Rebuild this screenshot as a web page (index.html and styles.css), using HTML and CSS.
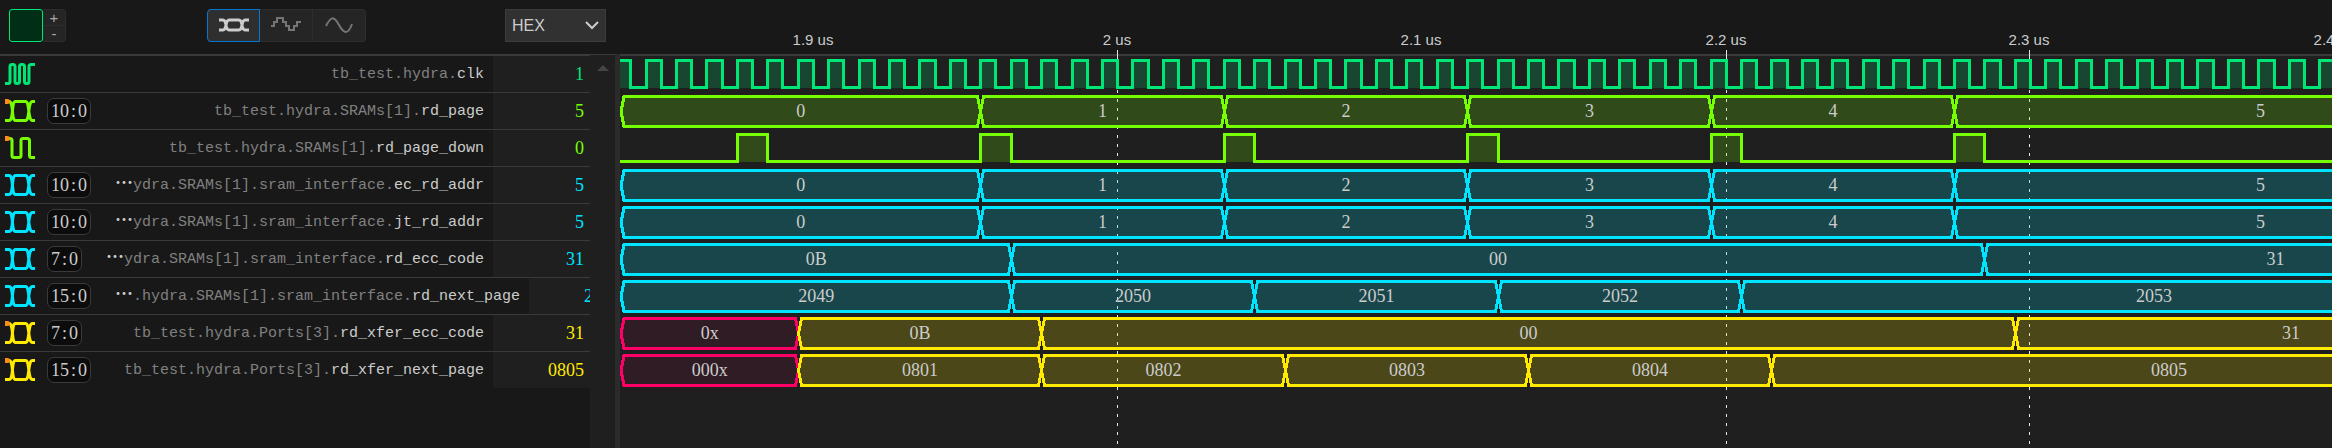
FILE: index.html
```html
<!DOCTYPE html>
<html lang="en">
<head>
<meta charset="utf-8">
<title>Waveform viewer</title>
<link rel="stylesheet" href="styles.css">
</head>
<body>
<svg class="defs" aria-hidden="true">
  <symbol id="i-clk" viewBox="0 0 30 22"><path d="M0 20.500H3Q5 20.500 5 18.500V3.500Q5 1.500 7 1.500H8Q10 1.500 10 3.500V18.500Q10 20.500 12 20.500Q14.500 20.500 14.500 18.500V3.500Q14.500 1.500 16.500 1.500H17.500Q19.500 1.500 19.500 3.500V18.500Q19.500 20.500 21.500 20.500H22Q24 20.500 24 18.500V3.500Q24 1.500 26 1.500H30"/></symbol>
  <symbol id="i-bus" viewBox="0 0 30 22"><path d="M0 1.500H4C9 1.500 6 20.500 10.500 20.500H20.500C25 20.500 22.500 1.500 27.500 1.500H30M0 20.500H4C9 20.500 6 1.500 10.500 1.500H20.500C25 1.500 22.500 20.500 27.500 20.500H30"/></symbol>
  <symbol id="i-bit" viewBox="0 0 30 22"><path d="M0 1.500H5Q7 1.500 7 3.500V18.500Q7 20.500 9 20.500H14Q16 20.500 16 18.500V3.500Q16 1.500 18 1.500H22Q24.500 1.500 24.500 3.500V18.500Q24.500 20.500 26.500 20.500H30"/></symbol>
</svg>
<main class="viewer">
  <section class="side">
    <header class="toolbar">
      <button class="swatch" aria-label="Signal colour"></button>
      <div class="stepper"><button aria-label="Increase height">+</button><button aria-label="Decrease height">-</button></div>
      <div class="modes">
        <button class="on" aria-label="Digital"><svg width="32" height="16" viewBox="0 0 32 16"><path d="M1 3H5C9 3 7 13 11 13H21C25 13 23 3 27 3H31M1 13H5C9 13 7 3 11 3H21C25 3 23 13 27 13H31"/></svg></button>
        <button aria-label="Stepped"><svg width="32" height="16" viewBox="0 0 32 16"><path d="M1 9H4V5H7V1H13V5H16V9H19V13H24V9H27V5H31"/></svg></button>
        <button aria-label="Smooth"><svg width="32" height="16" viewBox="0 0 32 16"><path d="M3 9C8 -1 11 -1 16 8S25 18 29 7"/></svg></button>
      </div>
      <div class="radix">
        <select aria-label="Number format"><option>HEX</option></select>
        <svg width="14" height="9" viewBox="0 0 14 9" aria-hidden="true"><path d="M1 1L7 7L13 1"/></svg>
      </div>
    </header>
    <div class="body">
      <ul class="signals">
        <li class="clk"><svg class="ico"><use href="#i-clk"/></svg><span class="name"><i>tb_test.hydra.</i>clk</span><span class="val">1</span></li>
        <li class="lime dot"><svg class="ico"><use href="#i-bus"/></svg><span class="range">10<b>:</b>0</span><span class="name"><i>tb_test.hydra.SRAMs[1].</i>rd_page</span><span class="val">5</span></li>
        <li class="lime dot"><svg class="ico"><use href="#i-bit"/></svg><span class="name"><i>tb_test.hydra.SRAMs[1].</i>rd_page_down</span><span class="val">0</span></li>
        <li class="cyan"><svg class="ico"><use href="#i-bus"/></svg><span class="range">10<b>:</b>0</span><span class="name"><em>⋯</em><i>ydra.SRAMs[1].sram_interface.</i>ec_rd_addr</span><span class="val">5</span></li>
        <li class="cyan"><svg class="ico"><use href="#i-bus"/></svg><span class="range">10<b>:</b>0</span><span class="name"><em>⋯</em><i>ydra.SRAMs[1].sram_interface.</i>jt_rd_addr</span><span class="val">5</span></li>
        <li class="cyan"><svg class="ico"><use href="#i-bus"/></svg><span class="range">7<b>:</b>0</span><span class="name"><em>⋯</em><i>ydra.SRAMs[1].sram_interface.</i>rd_ecc_code</span><span class="val">31</span></li>
        <li class="cyan"><svg class="ico"><use href="#i-bus"/></svg><span class="range">15<b>:</b>0</span><span class="name"><em>⋯</em><i>.hydra.SRAMs[1].sram_interface.</i>rd_next_page</span><span class="val">2053</span></li>
        <li class="yellow dot"><svg class="ico"><use href="#i-bus"/></svg><span class="range">7<b>:</b>0</span><span class="name"><i>tb_test.hydra.Ports[3].</i>rd_xfer_ecc_code</span><span class="val">31</span></li>
        <li class="yellow dot"><svg class="ico"><use href="#i-bus"/></svg><span class="range">15<b>:</b>0</span><span class="name"><i>tb_test.hydra.Ports[3].</i>rd_xfer_next_page</span><span class="val">0805</span></li>
      </ul>
      <div class="scroll"><span class="up"></span></div>
    </div>
  </section>
  <div class="splitter"></div>
  <section class="waves">
    <svg class="grid" id="grid"></svg>
    <svg class="ruler" id="ruler"></svg>
    <div class="rows" id="rows"></div>
  </section>
</main>
<script src="waves.js"></script>
</body>
</html>
```
FILE: styles.css
```css
* { box-sizing: border-box; }
body {
  margin: 0;
  background: #181818;
  color: #ccc;
  font-family: "Liberation Sans", Arial, sans-serif;
  overflow: hidden;
}
button { font: inherit; color: inherit; padding: 0; margin: 0; }
.defs { display: none; }
.viewer { display: flex; min-height: 100vh; }

.side { flex: none; width: 615px; display: flex; flex-direction: column; }
.toolbar {
  display: flex;
  align-items: center;
  height: 55px;
  padding: 0 9px 4px;
  border-bottom: 1px solid #3a3a3a;
}
.swatch { width: 34px; height: 33px; border: 1px solid #00e676; border-radius: 3px; background: #002e17; }
.stepper {
  display: flex;
  flex-direction: column;
  width: 23px;
  height: 33px;
  border: 1px solid #2d2d2d;
  border-left: 0;
  border-radius: 0 4px 4px 0;
  background: #252525;
  color: #aaa;
  font-size: 15px;
  line-height: 15px;
}
.stepper button { flex: 1; border: 0; background: none; }
.stepper button + button { border-top: 1px solid #2d2d2d; }
.modes { display: flex; height: 33px; margin-left: 141px; }
.modes button {
  display: flex;
  align-items: center;
  justify-content: center;
  width: 53px;
  border: 1px solid #2d2d2d;
  border-left: 0;
  background: #252525;
}
.modes button:last-child { border-radius: 0 4px 4px 0; }
.modes .on { border: 1px solid #0078d4; border-radius: 4px 0 0 4px; background: #2f2f2f; }
.modes path { fill: none; stroke: #757575; stroke-width: 2; }
.modes .on path { stroke: #ccc; stroke-width: 3; }
.radix { display: grid; align-items: center; width: 101px; height: 33px; margin-left: auto; }
.radix > * { grid-area: 1 / 1; }
.radix select {
  appearance: none;
  width: 100%;
  height: 100%;
  padding: 0 6px;
  border: 1px solid #3c3c3c;
  border-radius: 0;
  background: #313131;
  color: #ccc;
  font: 16px "Liberation Sans", Arial, sans-serif;
}
.radix svg { justify-self: end; margin-right: 7px; pointer-events: none; }
.radix path { fill: none; stroke: #ccc; stroke-width: 2; }

.body { flex: 1; display: flex; }
.signals {
  flex: 1;
  min-width: 0;
  margin: 0;
  padding: 0;
  border-top: 1px solid #3a3a3a;
  list-style: none;
}
.signals li {
  position: relative;
  display: flex;
  align-items: center;
  height: 37px;
  padding-left: 5px;
  border-bottom: 1px solid #3a3a3a;
  overflow: hidden;
}
.signals li:last-child { border-bottom-color: transparent; }
.ico { flex: none; width: 30px; height: 22px; margin-right: 12px; fill: none; stroke: currentColor; stroke-width: 3; }
.dot::before {
  content: "";
  position: absolute;
  left: 5px;
  top: 6px;
  width: 5px;
  height: 5px;
  border-radius: 0 3px 3px 0;
  background: #ff8c1a;
}
.range {
  flex: none;
  height: 26px;
  padding: 0 3px;
  border: 1px solid #3a3a3a;
  border-radius: 7px;
  background: #0c0c0c;
  color: #ccc;
  font: 18px/24px "Liberation Serif", serif;
}
.range b { padding: 0 2px; font-weight: 400; }
.name {
  flex: 1 0 auto;
  padding: 2px 9px 0 24px;
  color: #ccc;
  font: 15px/34px "Liberation Mono", monospace;
  text-align: right;
  white-space: nowrap;
}
.name i { color: #808080; font-style: normal; }
.name em { display: inline-block; width: 18px; font: bold 18px/18px "Noto Sans CJK SC", sans-serif; text-align: center; }
.val {
  flex: none;
  width: 97px;
  padding-right: 6px;
  background: #1f1f1f;
  font: 18px/36px "Liberation Serif", serif;
  text-align: right;
}
.scroll { flex: none; width: 25px; background: #1f1f1f; }
.up {
  display: block;
  margin: 10px auto 0 7px;
  width: 0;
  border: 6px solid transparent;
  border-top: 0;
  border-bottom-color: #454545;
}
.splitter { flex: none; width: 5px; margin-top: 54px; background: #2b2b2b; }

.clk { color: #00e676; }
.lime { color: #76ff03; }
.cyan { color: #00e5ff; }
.yellow { color: #ffea00; }
.undef { color: #ff0066; }

.waves { position: relative; flex: 1; min-width: 0; display: flex; flex-direction: column; overflow: hidden; }
.ruler { flex: none; width: 100%; height: 56px; border-bottom: 2px solid #3a3a3a; z-index: 1; }
.ruler text { fill: #ccc; font-size: 15px; text-anchor: middle; }
.grid { position: absolute; inset: 0; width: 100%; height: 100%; z-index: 2; }
.grid line { stroke: #e6e6e6; stroke-width: 1; shape-rendering: crispEdges; }
.grid .dash { stroke-dasharray: 3 6; }
.rows { flex: 1; background: #1f1f1f; }
.wave { position: relative; display: block; width: 100%; height: 37px; z-index: 3; }
.wave .line { fill: none; stroke: currentColor; stroke-width: 3; shape-rendering: crispEdges; }
.wave .area { fill: currentColor; fill-opacity: 0.2; }
.wave .undef .area { fill-opacity: 0.08; }
.wave text { fill: #ccc; font: 18px "Liberation Serif", serif; text-anchor: middle; }
```
FILE: waves.js
```js
// Horizontal scale: CYCLE is the width of one clock cycle, ORIGIN the rising edge of cycle 0.
const CYCLE = 30.43;
const ORIGIN = 25.5;
const END = 63.1;
const at = n => Math.round(ORIGIN + n * CYCLE);
const NS = "http://www.w3.org/2000/svg";

const signals = [
  { color: "clk", clock: true },
  { color: "lime", bus: [[-1, "0"], [11, "1"], [19, "2"], [27, "3"], [35, "4"], [43, "5"]] },
  { color: "lime", pulses: [3, 11, 19, 27, 35, 43] },
  { color: "cyan", bus: [[-1, "0"], [11, "1"], [19, "2"], [27, "3"], [35, "4"], [43, "5"]] },
  { color: "cyan", bus: [[-1, "0"], [11, "1"], [19, "2"], [27, "3"], [35, "4"], [43, "5"]] },
  { color: "cyan", bus: [[-1, "0B"], [12, "00"], [44, "31"]] },
  { color: "cyan", bus: [[-1, "2049"], [12, "2050"], [20, "2051"], [28, "2052"], [36, "2053"]] },
  { color: "yellow", bus: [[-1, "0x", "undef"], [5, "0B"], [13, "00"], [45, "31"]] },
  { color: "yellow", bus: [[-1, "000x", "undef"], [5, "0801"], [13, "0802"], [21, "0803"], [29, "0804"], [37, "0805"]] },
];

function busMarkup(bus) {
  return bus.map(([n, label, cls], i) => {
    const a = n < 0 ? 1 : at(n) + 0.5;
    const b = (i + 1 < bus.length ? at(bus[i + 1][0]) : at(END)) + 0.5;
    const d = `M${a} 18.5L${a + 3} 3.5H${b - 3}L${b} 18.5L${b - 3} 33.5H${a + 3}Z`;
    return `<g class="${cls || ""}"><path class="area" d="${d}"/><path class="line" d="${d}"/>` +
      `<text x="${(a + b) / 2}" y="24">${label}</text></g>`;
  }).join("");
}

function bitMarkup(highs) {
  let line = "M-4 31.5";
  let area = "";
  for (const [a, b] of highs) {
    line += `H${a + 0.5}V4.5H${b + 0.5}V31.5`;
    area += `M${a} 4.5H${b}V32H${a}Z`;
  }
  return `<path class="area" d="${area}"/><path class="line" d="${line}H4000"/>`;
}

document.getElementById("rows").innerHTML = signals.map(s => {
  let inner;
  if (s.bus) inner = busMarkup(s.bus);
  else if (s.pulses) inner = bitMarkup(s.pulses.map(n => [at(n), at(n + 1)]));
  else inner = bitMarkup(Array.from({ length: 80 }, (_, i) => [at(i - 1), at(i - 0.5)]));
  return `<svg class="wave ${s.color}" xmlns="${NS}">${inner}</svg>`;
}).join("");

const ticks = [["1.9 us", 193], ["2 us", 497, true], ["2.1 us", 801], ["2.2 us", 1106, true], ["2.3 us", 1409, true], ["2.4 us", 1714]];
document.getElementById("ruler").innerHTML =
  ticks.map(([t, x]) => `<text x="${x}" y="45">${t}</text>`).join("");
document.getElementById("grid").innerHTML =
  ticks.filter(t => t[2]).map(([, x]) =>
    `<line x1="${x + 0.5}" x2="${x + 0.5}" y1="50" y2="59"/>` +
    `<line class="dash" x1="${x + 0.5}" x2="${x + 0.5}" y1="63" y2="4000"/>`).join("");
```
